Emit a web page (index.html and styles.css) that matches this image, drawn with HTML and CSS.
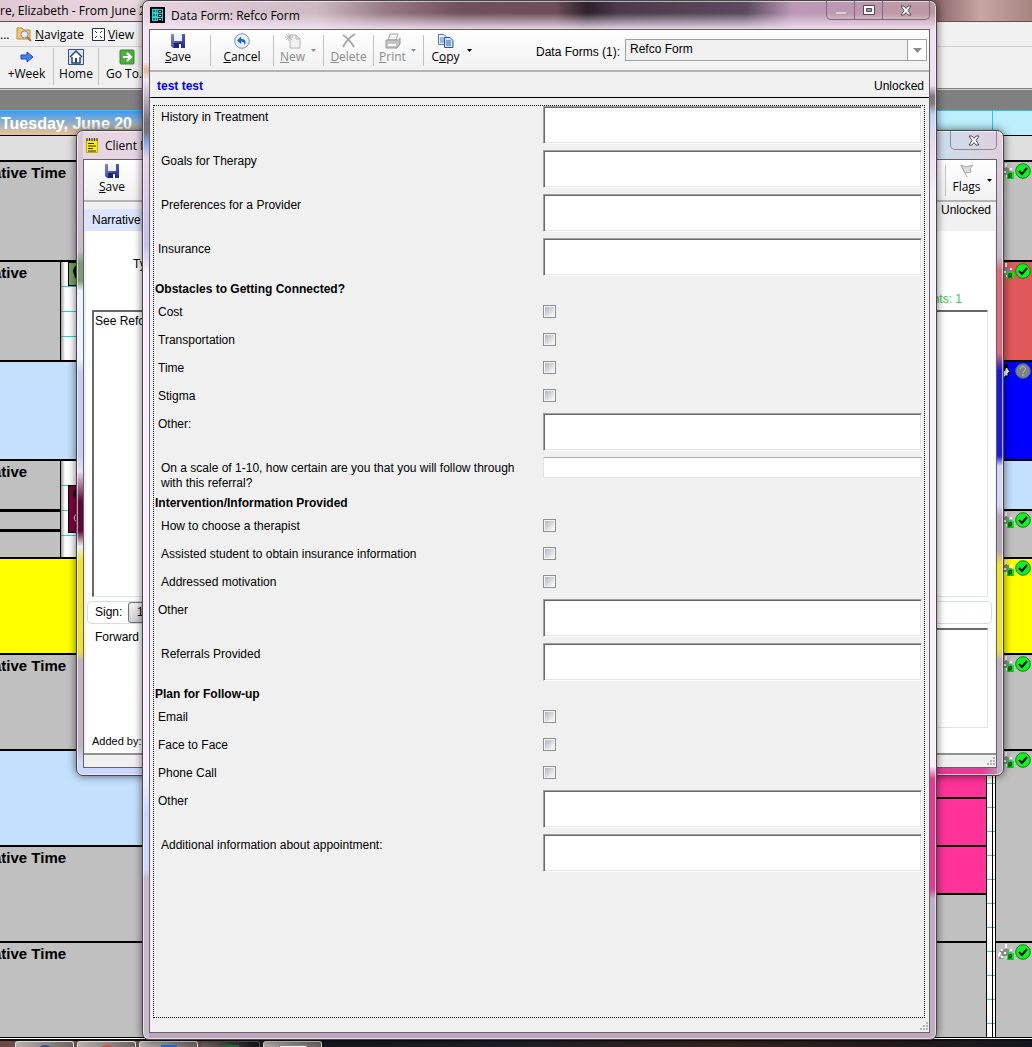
FILE: index.html
```html
<!DOCTYPE html>
<html lang="en">
<head>
<meta charset="utf-8">
<title>Data Form: Refco Form</title>
<link rel="stylesheet" href="styles.css">
</head>
<body>
<svg class="defs" aria-hidden="true">
  <defs>
    <linearGradient id="disk" x1="0" y1="0" x2="1" y2="1"><stop offset="0" stop-color="#8088e8"/><stop offset="1" stop-color="#1c2590"/></linearGradient>
    <symbol id="i-save" viewBox="0 0 16 16"><path d="M1 1h14v14H3l-2-2z" fill="url(#disk)"/><path d="M4 1h8v7H4z" fill="#eef2fb"/><path d="M4 10h8v5H4z" fill="#20266e"/><path d="M9 11h2v4H9z" fill="#fff"/></symbol>
    <symbol id="i-group" viewBox="0 0 17 16"><path d="M2 13h3v-3H3v-3h3V5h3V1h1v4h2v3h3v3h-3v3H9v-2H6v3H2z" fill="#8c8c8c"/><path d="M8 1h3M8 3h3M4 6h3M13 6h3M2 9h2M7 9h3M4 13h3M1 11h2M9 13h2" stroke="#fff" stroke-width="2" stroke-dasharray="2 1"/><path d="M10 9h7v7h-7z" fill="#00f010"/><path d="M12 15.500v-5h2.500v2.500H12M13 13l2 2.500" stroke="#001800" fill="none"/></symbol>
    <symbol id="i-check" viewBox="0 0 16 16"><circle cx="8" cy="8" r="7.300" fill="#0bf51a" stroke="#147820"/><path d="M4 8l3 3 5-6" fill="none" stroke="#000" stroke-width="2"/></symbol>
    <symbol id="i-x" viewBox="0 0 12 11"><path d="M1 1h3l2 2.500L8 1h3L8 5.500l3 4.500H8L6 7.500 4 10H1l3-4.500z" fill="#fff" stroke="#4c4a5c"/></symbol>
  </defs>
</svg>

<div class="desktop">
  <header class="app-title">re, Elizabeth - From June 20</header>
  <nav class="app-menu">
    <span class="dots">...</span>
    <button class="menu-item" type="button">
      <svg width="16" height="16" viewBox="0 0 16 16"><path d="M1 2h5l2 2h6v9H1z" fill="#f2c66b" stroke="#c38d35"/><circle cx="8.500" cy="8.500" r="3.500" fill="#dcebf7" stroke="#878da0"/><path d="M11 11l4 4" stroke="#9a7657" stroke-width="2"/></svg>
      <span><u>N</u>avigate</span>
    </button>
    <button class="menu-item" type="button">
      <svg width="13" height="13" viewBox="0 0 13 13"><path d="M.5.5h12v12H.5z" fill="#fff" stroke="#20304c"/><path d="M3 3l2 2M10 3L8 5M3 10l2-2M10 10L8 8" stroke="#333"/></svg>
      <span><u>V</u>iew</span>
    </button>
  </nav>
  <div class="app-tools">
    <button class="app-tool week" type="button"><svg width="14" height="18" viewBox="0 0 14 18"><path d="M1 7h6V4l6 5-6 5v-3H1z" fill="#4285e8" stroke="#1b4ca8"/></svg>+Week</button>
    <button class="app-tool home" type="button"><svg width="16" height="18" viewBox="0 0 16 18"><path d="M.5 1.500h15v15H.5z" fill="#dbe8f5" stroke="#2f5282"/><path d="M2 9l6-6 6 6M4 9v6h8V9" fill="#fff" stroke="#24477a" stroke-width="1.500"/><path d="M7 10h2v5H7z" fill="#24477a"/></svg>Home</button>
    <button class="app-tool" type="button"><svg width="16" height="18" viewBox="0 0 16 18"><rect x="1" y="2" width="14" height="14" rx="1" fill="#4fae43" stroke="#39862f"/><path d="M4 9h7M8 5l4 4-4 4" stroke="#fff" stroke-width="2" fill="none"/></svg>Go To...</button>
  </div>
  <div class="band"></div>
  <div class="day-head"><strong>Tuesday, June 20</strong><span class="next-day"></span></div>
  <div class="all-day"></div>

  <main class="calendar">
    <section class="day first">
      <div class="slot s100">ative Time</div>
      <div class="slot s100 split"><div class="event">ative</div><div class="gutter"><div class="chip green"><svg width="9" height="18" viewBox="0 0 9 18"><path d="M9 2C5 3 3 7 5 11l1 4 3 1z"/></svg></div></div></div>
      <div class="slot s99 sky"></div>
      <div class="slot s98 split"><div class="event bars">ative</div><div class="gutter"><div class="chip plum"><svg width="9" height="40" viewBox="0 0 9 40"><path d="M9 2C5 3 3 7 5 11l4 4z"/><path d="M9 28c-5 0-5 8 0 8" fill="none" stroke="#fff"/></svg></div></div></div>
      <div class="slot s96 yellow"></div>
      <div class="slot s96">ative Time</div>
      <div class="slot s96 sky"></div>
      <div class="slot s96">ative Time</div>
      <div class="slot rest">ative Time</div>
    </section>
    <section class="day second">
      <div class="lead"></div>
      <div class="slot s48 pink"></div>
      <div class="slot s48 pink"></div>
      <div class="slot s48 pink"></div>
      <div class="slot s48"></div>
      <div class="slot rest"></div>
    </section>
    <div class="ruler"></div>
    <section class="day third">
      <div class="slot s100 icons"><svg width="17" height="16"><use href="#i-group"/></svg><svg width="16" height="16"><use href="#i-check"/></svg></div>
      <div class="slot s100 icons red"><svg width="17" height="16"><use href="#i-group"/></svg><svg width="16" height="16"><use href="#i-check"/></svg></div>
      <div class="slot s99 icons blue"><svg width="17" height="16" viewBox="0 0 17 16"><path d="M5 3c3-2 6 0 6 3l2 3-2 1v3H8v2H5z" fill="#fff" stroke="#000"/><path d="M4 1h7v4H9L8 8H4z"/></svg><svg width="16" height="16" viewBox="0 0 16 16"><circle cx="8" cy="8" r="7.300" fill="#808080" stroke="#387c80"/><path d="M5.500 6c0-4 5-3 5 0 0 2-2.500 2-2.500 4M8 11v2" fill="none" stroke="#c0c0c0"/></svg></div>
      <div class="slot s50 sky"></div>
      <div class="slot s48 icons"><svg width="17" height="16"><use href="#i-group"/></svg><svg width="16" height="16"><use href="#i-check"/></svg></div>
      <div class="slot s96 icons yellow"><svg width="17" height="16"><use href="#i-group"/></svg><svg width="16" height="16"><use href="#i-check"/></svg></div>
      <div class="slot s96 icons"><svg width="17" height="16"><use href="#i-group"/></svg><svg width="16" height="16"><use href="#i-check"/></svg></div>
      <div class="slot s192 icons"><svg width="17" height="16"><use href="#i-group"/></svg><svg width="16" height="16"><use href="#i-check"/></svg></div>
      <div class="slot rest icons"><svg width="17" height="16"><use href="#i-group"/></svg><svg width="16" height="16"><use href="#i-check"/></svg></div>
    </section>
  </main>

  <footer class="taskbar">
    <span class="task"><i class="dot navy"></i></span>
    <span class="task"><i class="dot crimson"></i></span>
    <span class="task"><i class="dot azure"></i></span>
    <span class="task plain"><i class="dot leaf"></i></span>
    <span class="task"><i class="dot paper"></i></span>
  </footer>

  <section class="window client">
    <header class="client-title">
      <svg width="12" height="15" viewBox="0 0 12 15"><path d="M.5 2h11v12.500H.5z" fill="#fff000" stroke="#b8b000"/><path d="M1 0v3M3.500 0v3M6 0v3M8.500 0v3M11 0v3" stroke="#222"/><path d="M2 5.500h6M2 8h8M2 10.500h5M2 13h8" stroke="#222"/></svg>
      <span>Client N</span>
      <button class="close-small" type="button" aria-label="Close"><svg width="12" height="11"><use href="#i-x"/></svg></button>
    </header>
    <div class="client-body">
      <div class="toolbar client-tools">
        <button class="tool save" type="button"><svg width="16" height="16"><use href="#i-save"/></svg><span><u>S</u>ave</span></button>
        <span class="push"></span>
        <span class="sep"></span>
        <button class="tool flags" type="button"><svg width="16" height="16" viewBox="0 0 16 16"><path d="M2 2l6 12M2 2l5 2 7-2-3 4 1 3-6 1z" fill="#ddd" stroke="#aaa"/></svg><span>Flags</span></button>
        <svg class="caret" width="5" height="3" viewBox="0 0 5 3"><path d="M0 0h5L2.500 3z"/></svg>
      </div>
      <div class="client-tabs"><button class="tab" type="button">Narrative</button><span>Unlocked</span></div>
      <div class="client-page">
        <div class="note-meta"><span class="type">Ty</span><span class="count">ents: 1</span></div>
        <textarea class="note" aria-label="Narrative">See Refco</textarea>
        <div class="sign"><span>Sign:</span><button type="button">1</button></div>
        <div class="forward"><label for="forward">Forward</label><textarea id="forward" class="forward-box"></textarea></div>
        <div class="added">Added by:</div>
      </div>
      <div class="status"><svg class="grip" width="9" height="9" viewBox="0 0 9 9"><path d="M7 1h2M7 4h2M7 7h2M4 4h2M4 7h2M1 7h2" stroke="#b4b4b4" stroke-width="2"/></svg></div>
    </div>
  </section>

  <section class="window form-window">
    <header class="form-title">
      <svg width="15" height="16" viewBox="0 0 15 16"><path d="M1 1h13v14H1z" fill="#20d8d8" stroke="#000" stroke-width="2"/><path d="M3 4h4M3 8h4M3 12h4" stroke="#000" stroke-dasharray="2 1"/><path d="M8.500 3.500h3v2h-3zM8.500 7.500h3v2h-3zM8.500 11.500h3v2h-3z" fill="#9ff" stroke="#000"/></svg>
      <h1>Data Form: Refco Form</h1>
      <div class="controls">
        <button type="button" aria-label="Minimize"><svg width="12" height="11" viewBox="0 0 12 11"><path d="M.5 6.500h11v3H.5z" fill="#decdd5" stroke="#b59da8"/></svg></button>
        <button type="button" aria-label="Maximize"><svg width="12" height="11" viewBox="0 0 12 11"><path d="M.5.5h11v9H.5z" fill="#fff" stroke="#4c4a5c"/><path d="M3.500 3.500h5v3h-5z" fill="#b7939f" stroke="#4c4a5c"/></svg></button>
        <button class="close" type="button" aria-label="Close"><svg width="12" height="11"><use href="#i-x"/></svg></button>
      </div>
    </header>
    <div class="form-body">
      <div class="toolbar">
        <button class="tool save" type="button"><svg width="16" height="16"><use href="#i-save"/></svg><span><u>S</u>ave</span></button>
        <span class="sep"></span>
        <button class="tool cancel" type="button"><svg width="16" height="16" viewBox="0 0 16 16"><circle cx="8" cy="8" r="7.300" fill="#e9f1fb" stroke="#6f8fc2"/><path d="M11 12c2-5-1-6-4-6V3.500L3 7.500l4 3.500V8.500c2 0 3 .5 4 3.500z" fill="#1b63cc"/></svg><span><u>C</u>ancel</span></button>
        <span class="sep"></span>
        <button class="tool" type="button" disabled><svg width="16" height="16" viewBox="0 0 16 16"><path d="M5 2h6l4 4v9H5z" fill="#f1f1f1" stroke="#b4b4b4"/><path d="M11 2v4h4" fill="none" stroke="#b4b4b4"/><path d="M4 0v8M0 4h8M1 1l6 6M7 1L1 7" stroke="#bbb"/></svg><span><u>N</u>ew</span></button>
        <svg class="caret dim" width="5" height="3" viewBox="0 0 5 3"><path d="M0 0h5L2.500 3z"/></svg>
        <span class="sep"></span>
        <button class="tool delete" type="button" disabled><svg width="16" height="16" viewBox="0 0 16 16"><path d="M2 2c5 3 8 7 11 12M14 1C9 4 5 8 2 14" fill="none" stroke="#a8a8a8" stroke-width="2"/></svg><span><u>D</u>elete</span></button>
        <span class="sep"></span>
        <button class="tool" type="button" disabled><svg width="16" height="16" viewBox="0 0 16 16"><path d="M5 1h8l-2 6H3z" fill="#f2f2f2" stroke="#aaa"/><path d="M1 7h13l1-2v6l-3 4H1z" fill="#c4c4c4" stroke="#999"/><path d="M3 11h8v2H3z" fill="#fff"/></svg><span><u>P</u>rint</span></button>
        <svg class="caret dim" width="5" height="3" viewBox="0 0 5 3"><path d="M0 0h5L2.500 3z"/></svg>
        <span class="sep"></span>
        <button class="tool copy" type="button"><svg width="16" height="16" viewBox="0 0 16 16"><path d="M.5 1.500H6l3 3v7H.5z" fill="#e6f0fc" stroke="#4a7cc0"/><path d="M2 5h4M2 7h4M2 9h4" stroke="#4a7cc0"/><path d="M6.500 4.500H12l3 3v7H6.500z" fill="#cfe1f8" stroke="#2a58a8"/><path d="M8 8h5M8 10h5M8 12h5" stroke="#3768b4"/></svg><span>C<u>o</u>py</span></button>
        <svg class="caret" width="5" height="3" viewBox="0 0 5 3"><path d="M0 0h5L2.500 3z"/></svg>
        <span class="push"></span>
        <label class="pick-label" for="form-pick">Data Forms (1):</label>
        <div class="pick">
          <select id="form-pick"><option>Refco Form</option></select>
          <span class="pick-arrow"><svg width="9" height="5" viewBox="0 0 9 5"><path d="M0 0h9L4.500 5z" fill="#8c8c8c"/></svg></span>
        </div>
      </div>
      <div class="who"><strong>test test</strong><span>Unlocked</span></div>
      <form class="sheet">
        <div class="row tall"><label class="in" for="f1">History in Treatment</label><textarea id="f1"></textarea></div>
        <div class="row tall"><label class="in" for="f2">Goals for Therapy</label><textarea id="f2"></textarea></div>
        <div class="row tall"><label class="in" for="f3">Preferences for a Provider</label><textarea id="f3"></textarea></div>
        <div class="row tall"><label for="f4">Insurance</label><textarea id="f4"></textarea></div>
        <h2>Obstacles to Getting Connected?</h2>
        <div class="row"><label for="f5">Cost</label><input id="f5" type="checkbox"></div>
        <div class="row"><label for="f6">Transportation</label><input id="f6" type="checkbox"></div>
        <div class="row"><label for="f7">Time</label><input id="f7" type="checkbox"></div>
        <div class="row"><label for="f8">Stigma</label><input id="f8" type="checkbox"></div>
        <div class="row tall"><label for="f9">Other:</label><textarea id="f9"></textarea></div>
        <div class="row scale"><label class="in" for="f10">On a scale of 1-10, how certain are you that you will follow through<br>with this referral?</label><input id="f10" type="text"></div>
        <h2>Intervention/Information Provided</h2>
        <div class="row"><label class="in" for="f11">How to choose a therapist</label><input id="f11" type="checkbox"></div>
        <div class="row"><label class="in" for="f12">Assisted student to obtain insurance information</label><input id="f12" type="checkbox"></div>
        <div class="row"><label class="in" for="f13">Addressed motivation</label><input id="f13" type="checkbox"></div>
        <div class="row tall"><label for="f14">Other</label><textarea id="f14"></textarea></div>
        <div class="row tall"><label class="in" for="f15">Referrals Provided</label><textarea id="f15"></textarea></div>
        <h2>Plan for Follow-up</h2>
        <div class="row"><label for="f16">Email</label><input id="f16" type="checkbox"></div>
        <div class="row"><label for="f17">Face to Face</label><input id="f17" type="checkbox"></div>
        <div class="row"><label for="f18">Phone Call</label><input id="f18" type="checkbox"></div>
        <div class="row tall"><label for="f19">Other</label><textarea id="f19"></textarea></div>
        <div class="row tall"><label class="in" for="f20">Additional information about appointment:</label><textarea id="f20"></textarea></div>
      </form>
      <div class="status"><svg class="grip" width="9" height="9" viewBox="0 0 9 9"><path d="M7 1h2M7 4h2M7 7h2M4 4h2M4 7h2M1 7h2" stroke="#b4b4b4" stroke-width="2"/></svg></div>
    </div>
  </section>
</div>
</body>
</html>
```
FILE: styles.css
```css
* { box-sizing: border-box; }
body { margin: 0; font: 12px/15px "Liberation Sans", Arial, sans-serif; color: #000; }
button, input, textarea, select { font: inherit; color: inherit; margin: 0; border-radius: 0; }
button { background: none; border: 0; padding: 0; }
svg { display: block; flex: none; }
.defs { position: absolute; width: 0; height: 0; }

.desktop { position: relative; min-height: 100vh; display: flex; flex-direction: column; overflow: hidden; background: #c0c0c0; }

/* Scheduler window behind the dialogs */
.app-title, .app-menu, .app-tools, .client-title, .form-title, .toolbar { font-family: "Open Sans", "Noto Sans", sans-serif; }
.app-title { height: 22px; line-height: 21px; white-space: nowrap; border-bottom: 1px solid #6b4a50; background: linear-gradient(90deg, #dfc9d2, #ead9e1 143px, #6d4c55 50%, #8f6c6c 91%, #c7a5a3 95%, #a58580); }
.app-menu { height: 25px; display: flex; align-items: center; background: #f0f0f0; border-bottom: 1px solid #cfcfcf; }
.dots { width: 16px; }
.menu-item { display: flex; align-items: center; gap: 3px; margin-right: 8px; }
.app-tools { height: 42px; display: flex; background: #f0f0f0; border-bottom: 1px solid #808080; padding: 1px 0 3px; }
.app-tool { display: flex; flex-direction: column; align-items: center; padding: 0 7px; white-space: nowrap; }
.app-tool.week, .app-tool.home { border-right: 1px solid #c4c4c4; }
.week { width: 54px; }
.home { width: 45px; }
.band { height: 21px; background: #808080; border-top: 1px solid #d0d0d0; }
.day-head { height: 26px; display: flex; justify-content: space-between; border-top: 1px solid #20c8f0; border-bottom: 1px solid #000; background: linear-gradient(#3c9af4, #f0c494); color: #fff; font-size: 16px; line-height: 26px; }
.day-head strong { padding-left: 1px; }
.next-day { flex: 0 0 50%; background: linear-gradient(90deg, transparent calc(100% - 40px), #27c4ee calc(100% - 40px), #27c4ee calc(100% - 39px), transparent calc(100% - 39px)), #bceefc; }
.all-day { height: 24px; background: #dedede; }

.calendar { flex: 1; display: flex; min-height: 877px; border-bottom: 1px solid #000; }
.day { display: flex; flex-direction: column; }
.first, .second { flex: 1; }
.second { border-right: 1px solid #000; }
.third { flex: 0 0 37px; border-left: 1px solid #000; }
.slot { border-top: 2px solid #000; background: #c0c0c0; font-weight: bold; font-size: 15px; line-height: 18px; padding-top: 2px; text-indent: -7px; overflow: hidden; }
.s48 { height: 48px; }
.s50 { height: 50px; }
.s96 { height: 96px; }
.s98 { height: 98px; }
.s99 { height: 99px; }
.s100 { height: 100px; }
.s192 { height: 192px; }
.rest { flex: 1; }
.lead { height: 589px; }
.sky { background: #c4e0ff; }
.yellow { background: #ff0; }
.pink { background: #ff3399; }
.red { background: #e05858; }
.blue { background: #00f; }
.split { display: flex; padding: 0; }
.event { width: 61px; border-right: 1px solid #000; padding-top: 2px; }
.bars { background: linear-gradient(transparent 48px, #000 48px, #000 51px, transparent 51px, transparent 68px, #000 68px, #000 71px, transparent 71px); }
.gutter { flex: 1; padding-left: 7px; background: linear-gradient(90deg, rgba(90, 90, 90, .6), transparent 4px), repeating-linear-gradient(#fff 0 24px, #19dada 24px 25px); }
.chip { width: 40px; border: 1px solid #000; }
.chip.green { height: 24px; background: #77a663; }
.chip.plum { height: 48px; margin-top: 24px; background: #800040; }
.icons { display: flex; gap: 1px; padding: 1px 0 0 1px; }
.ruler { flex: 0 0 8px; background: linear-gradient(90deg, transparent 5px, #000 5px 6px, transparent 6px), repeating-linear-gradient(#fff 0 23px, #35c8d0 23px 24px); }

.taskbar { height: 9px; display: flex; gap: 3px; padding: 3px 0 0 15px; background: linear-gradient(#fff 1px, #111 1px 3px, transparent 3px), linear-gradient(90deg, #6b4a45, #66504f 20%, #15151c 26%, #20202a 50%, #3a2420 70%, #15161e); }
.task { width: 59px; height: 6px; overflow: hidden; border: 1px solid #ddd; border-bottom: 0; border-radius: 3px 3px 0 0; background: linear-gradient(90deg, #b9aeac, #6c625f); }
.task.plain { border-color: #5d5a5c; background: linear-gradient(90deg, #70605e, #161418); }
.dot { display: block; margin: 3px auto 0; width: 16px; height: 16px; border-radius: 8px; }
.navy { background: #2f4d94; }
.crimson { background: #e04535; }
.azure { background: #0a78d4; border-radius: 0; }
.leaf { background: #12733c; border-radius: 0; }
.paper { width: 28px; background: #fff; border: 1px solid #888; border-radius: 0; }

/* Glass window frames */
.window { position: absolute; display: flex; flex-direction: column; border: 1px solid #4a434c; border-radius: 7px; box-shadow: inset 0 0 0 1px rgba(255, 255, 255, .6), 0 0 9px rgba(0, 0, 0, .6); }

.client { top: 130px; left: 76px; right: 28px; height: 646px; padding: 0 6px 7px;
  background:
    linear-gradient(#d8c9d4, #c9bcc9 120px, #7d9c76 132px 150px, #eef4ff 160px 228px, #c8cef8 240px 325px, #e8dff0 340px, #600835 370px 400px, #eee 415px, #f2e230 430px 520px, #c3b3c4 530px 615px, #cdd6ff 630px) left / 6px 100% no-repeat,
    linear-gradient(#e4d3e0, #c5bac8 125px, #e06a76 140px 222px, #1a1ad8 240px 325px, #d0d8ff 335px 375px, #b9a8b9 385px 420px, #f2e230 434px 518px, #bdb0bf 530px) right / 6px 100% no-repeat,
    linear-gradient(90deg, #cdd6ff 65px, #e23c94 860px 905px, #b0a8ba) bottom / 100% 7px no-repeat,
    linear-gradient(90deg, #e5d6e2, #e0cedd 85%, #cfdcec 94%, #e0cedd); }
.client-title { height: 28px; display: flex; align-items: center; gap: 7px; padding-left: 3px; }
.close-small { align-self: flex-start; margin-left: auto; width: 47px; height: 19px; display: flex; justify-content: center; align-items: center; border: 1px solid #92858f; border-top: 0; border-radius: 0 0 5px 5px; }
.client-body { flex: 1; display: flex; flex-direction: column; border: 1px solid #66606a; background: #f0f0f0; }
.client-tools .flags { width: 41px; }
.client-tabs { height: 29px; display: flex; justify-content: space-between; align-items: flex-start; padding: 1px 5px 0 0; }
.tab { height: 22px; margin-top: 6px; padding: 0 8px; background: #dce4ff; font-size: 12px; }
.client-page { flex: 1; display: flex; flex-direction: column; padding: 0 3px 0 5px; margin: 0 1px 0 2px; background: #fff; }
.note-meta { height: 79px; display: flex; justify-content: space-between; align-items: flex-start; padding: 26px 30px 0 42px; }
.count { color: #2ecc40; padding-top: 35px; }
.note, .forward-box { resize: none; border: 2px solid; border-color: #696969 #e3e3e3 #e3e3e3 #696969; border-right-width: 1px; border-bottom-width: 1px; background: #fff; outline: 0; }
.note { height: 287px; margin: 0 4px 0 1px; padding: 2px 1px; }
.sign { height: 23px; display: flex; align-items: center; gap: 6px; margin-top: 4px; margin-left: -4px; padding-left: 7px; border: 1px solid #d3dde8; border-radius: 4px; }
.sign button { width: 24px; height: 21px; border: 1px solid #707070; border-radius: 3px; background: linear-gradient(#f2f2f2, #cfcfcf); }
.forward { display: flex; gap: 10px; margin: 4px 4px 0; }
.forward-box { flex: 1; height: 100px; }
.forward label { padding-top: 2px; }
.added { margin-top: 6px; padding-left: 1px; font-size: 11px; }
.client-body .status { height: 14px; border-top: 2px solid #909090; }

.form-window { top: 0; left: 142px; right: 95px; bottom: 7px; padding: 0 6px 6px;
  background:
    linear-gradient(#f3e5f3 32px, #e0b890 40px, #f3e5f3 50px, #77717c 92px 102px, #80a8e8 112px, #e9d2e8 128px, #c8c0e8 215px, #f4ecf8 240px 750px, #cdd6ff 782px 840px, #c8bacb 848px) left 0 top 29px / 6px 100% no-repeat,
    linear-gradient(#f0e0f5 55px, #82777f 66px 73px, #bcd8fa 85px, #e9d8f0 111px, #f7eefa 171px 736px, #e23c94 749px 859px, #c0afc2 869px) right 0 top 29px / 6px 100% no-repeat,
    linear-gradient(transparent 12px, rgba(243, 229, 243, .9) 28px) top / 100% 29px no-repeat,
    linear-gradient(90deg, #e6d4e1, #cdb8c3 22%, #9a7c8a 30%, #70505e 40%, #6d4d5a 52%, #30202c 56%, #4a3a4a 60%, #544354 68%, #5b4a60 76%, #bb98b6 82%, #bd98a4) top / 100% 29px no-repeat,
    #b8a8ba; }
.form-title { height: 28px; display: flex; align-items: center; padding-left: 1px; gap: 6px; }
.form-title h1 { margin: 0; font-size: 12px; font-weight: normal; }
.controls { display: flex; align-self: flex-start; margin-left: auto; height: 19px; border: 1px solid #82697a; border-top: 0; border-radius: 0 0 5px 5px; }
.controls button { width: 28px; display: flex; align-items: center; justify-content: center; border-right: 1px solid #82697a; }
.controls .close { width: 46px; border-right: 0; }
.form-body { flex: 1; display: flex; flex-direction: column; border: 1px solid #66606a; background: #f0f0f0; }

.toolbar { height: 42px; flex: none; display: flex; align-items: center; background: linear-gradient(#fff, #f1f1f1); border-bottom: 2px solid #b4b4b4; }
.tool { display: flex; flex-direction: column; align-items: center; width: 37px; height: 34px; }
.tool.save { width: 56px; margin-right: 4px; }
.tool.cancel { width: 62px; }
.tool.delete { width: 49px; }
.tool.copy { width: 43px; }
.tool:disabled { color: #8a8a8a; }
.sep { width: 1px; height: 31px; background: #c2c2c2; }
.caret { margin: 0 4px 0 0; }
.caret.dim { fill: #8c8c8c; margin: 0 7px 0 0; }
.push { flex: 1; }
.pick-label { font-family: "Liberation Sans", Arial, sans-serif; padding: 5px 5px 0 0; }
.pick { position: relative; width: 302px; height: 22px; margin-right: 2px; }
.pick select { display: block; width: 100%; height: 100%; padding: 0 4px 2px; appearance: none; border: 1px solid #a0a0a0; background: #f0f0f0; font-family: "Liberation Sans", Arial, sans-serif; }
.pick-arrow { position: absolute; top: 1px; right: 1px; bottom: 1px; width: 19px; display: flex; align-items: center; justify-content: center; border-left: 1px solid #a0a0a0; background: #fff; pointer-events: none; }
.who { height: 26px; flex: none; display: flex; justify-content: space-between; align-items: center; padding: 4px 5px 0 7px; border-bottom: 1px solid #000; }
.who strong { color: #0000f0; }

.sheet { flex: 1; margin: 7px 4px 0 3px; padding-right: 2px; border: 1px dotted #000; }
.sheet h2 { margin: 0; height: 19px; padding-left: 1px; font-size: 12px; line-height: 15px; }
.row { display: grid; grid-template-columns: 389px 1fr; align-items: start; height: 28px; }
.row.tall { height: 44px; }
.row.scale { height: 39px; }
.row label { padding: 4px 0 0 4px; }
.row label.in { padding-left: 7px; }
.row textarea { display: block; width: 100%; height: 38px; resize: none; border: 1px solid; border-color: #a0a0a0 #fff #fff #a0a0a0; background: #fff; box-shadow: inset 1px 1px #696969, inset -1px -1px #e3e3e3; outline: 0; }
.row input[type="text"] { width: 100%; height: 21px; padding: 0 3px; border: 1px solid #e2e3ea; border-top-color: #abadb3; border-radius: 1px; background: #fff; outline: 0; }
.row input[type="checkbox"] { appearance: none; width: 13px; height: 13px; margin-top: 4px; border: 1px solid #8e8f8f; background: linear-gradient(135deg, #b0b5c2, #fbfbfb) content-box, #f4f4f4; padding: 1px; box-shadow: inset 0 0 0 1px #f4f4f4; }
.form-body .status { height: 14px; }
.status { flex: none; display: flex; justify-content: flex-end; align-items: flex-end; padding: 1px; }
```
